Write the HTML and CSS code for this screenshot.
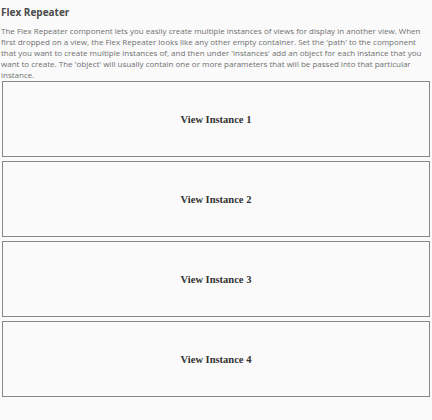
FILE: index.html
```html
<!DOCTYPE html>
<html>
<head>
<meta charset="utf-8">
<link rel="stylesheet" href="styles.css">
</head>
<body>
<div class="page">
  <div class="title">Flex Repeater</div>
  <div class="desc">The Flex Repeater component lets you easily create multiple instances of views for display in another view. When first dropped on a view, the Flex Repeater looks like any other empty container. Set the 'path' to the component that you want to create multiple instances of, and then under 'instances' add an object for each instance that you want to create. The 'object' will usually contain one or more parameters that will be passed into that particular instance.</div>
  <div class="repeater">
    <div class="instance">View Instance 1</div>
    <div class="instance">View Instance 2</div>
    <div class="instance">View Instance 3</div>
    <div class="instance">View Instance 4</div>
  </div>
</div>
</body>
</html>
```
FILE: styles.css
```css
html, body {
  margin: 0;
  padding: 0;
  background: #fafafa;
}
.page {
  padding: 5px 2px 0 1px;
  font-family: "Open Sans", "Noto Sans", sans-serif;
}
.title {
  font-size: 10px;
  font-weight: bold;
  color: #4a4a4a;
  line-height: 14px;
}
.desc {
  margin-top: 6px;
  padding-right: 4px;
  font-size: 8px;
  line-height: 11px;
  color: #707070;
}
.repeater {
  display: flex;
  flex-direction: column;
  gap: 4px;
  margin-top: 1px;
  padding-left: 1px;
}
.instance {
  height: 74px;
  border: 1px solid #8c8484;
  background: #fafafa;
  display: flex;
  align-items: center;
  justify-content: center;
  font-family: "Liberation Serif", "Times New Roman", serif;
  font-weight: bold;
  font-size: 10.5px;
  color: #333;
}
```
